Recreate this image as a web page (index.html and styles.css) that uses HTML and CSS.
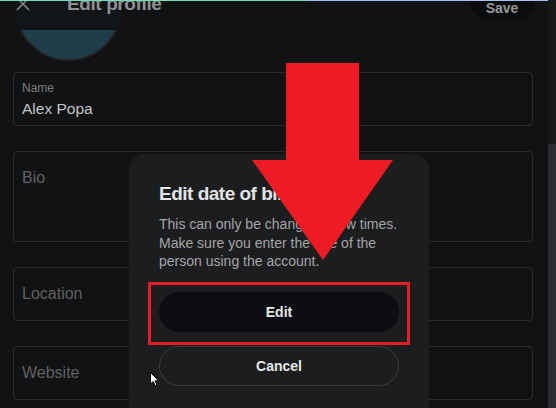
FILE: index.html
```html
<!DOCTYPE html>
<html lang="en">
<head>
<meta charset="utf-8">
<title>Edit profile</title>
<link rel="stylesheet" href="styles.css">
</head>
<body>
<div class="topline"><span class="seg-green"></span><span class="seg-blue"></span></div>

<main class="page">
  <div class="avatar"></div>
  <div class="fields">
    <div class="field field-filled">
      <span class="label">Name</span>
      <span class="value">Alex Popa</span>
    </div>
    <div class="field field-bio"><span class="placeholder">Bio</span></div>
    <div class="field"><span class="placeholder">Location</span></div>
    <div class="field"><span class="placeholder">Website</span></div>
  </div>
</main>

<header class="topbar">
  <svg class="close" width="14" height="14" viewBox="0 0 14 14"><path d="M1 1 L13 13 M13 1 L1 13" stroke="#8a8b8d" stroke-width="1.4" fill="none"/></svg>
  <h1 class="title">Edit profile</h1>
  <button class="save">Save</button>
</header>

<div class="scrollbar"><div class="thumb"></div></div>

<section class="modal">
  <h2 class="modal-title">Edit date of birth</h2>
  <p class="modal-text">This can only be changed a few times. Make sure you enter the age of the person using the account.</p>
  <div class="highlight">
    <button class="btn btn-edit">Edit</button>
  </div>
  <button class="btn btn-cancel">Cancel</button>
</section>

<svg class="arrow" width="556" height="408" viewBox="0 0 556 408">
  <polygon points="286,63 359,63 359,160 393,160 323,260 252,160 286,160" fill="#ed1c24"/>
</svg>

<svg class="cursor" width="10" height="15" viewBox="0 0 10 15">
  <path d="M0.5 0.5 L0.5 12 L3.2 9.4 L5.2 13.8 L7 13 L5 8.8 L8.6 8.8 Z" fill="#fff" stroke="#000" stroke-width="1"/>
</svg>
</body>
</html>
```
FILE: styles.css
```css
* { box-sizing: border-box; }
html, body {
  margin: 0;
  padding: 0;
  width: 556px;
  height: 408px;
  overflow: hidden;
  background: #111213;
  font-family: "Liberation Sans", Arial, sans-serif;
}
body { position: relative; }

.topline {
  position: absolute;
  top: 0; left: 0;
  width: 548px;
  height: 1px;
  display: flex;
  z-index: 5;
}
.seg-green { width: 306px; background: #6fe0b4; }
.seg-blue { flex: 1; background: #9ec3ee; }

.page {
  padding: 0 23px 0 13px;
}
.avatar {
  width: 107px;
  height: 107px;
  margin: -46px 0 0 2px;
  border-radius: 50%;
  background: #1f3e4a;
  border: 2px solid #242628;
}
.fields {
  margin-top: 11px;
  display: flex;
  flex-direction: column;
  gap: 25px;
}
.field {
  height: 54px;
  border: 1px solid #2a2b2d;
  border-radius: 4px;
  padding: 16px 8px 0;
  display: flex;
  flex-direction: column;
}
.field-filled { padding-top: 7px; }
.field-bio { height: 91px; }
.label {
  font-size: 12px;
  line-height: 16px;
  color: #7c7d7f;
}
.value {
  margin-top: 2px;
  font-size: 15.5px;
  line-height: 22px;
  color: #c4c5c7;
}
.placeholder {
  font-size: 16px;
  line-height: 20px;
  color: #606163;
}

.topbar {
  position: absolute;
  top: 0; left: 0;
  width: 548px;
  height: 30px;
  background: rgba(17, 18, 19, 0.93);
  display: flex;
  align-items: flex-start;
  z-index: 2;
}
.close {
  margin: -3px 0 0 16px;
}
.title {
  margin: -7px 0 0 37px;
  font-size: 19px;
  letter-spacing: -0.4px;
  line-height: 22px;
  font-weight: bold;
  color: #8f9092;
}
.save {
  margin: -11px 15px 0 auto;
  width: 62px;
  height: 30px;
  border: none;
  border-radius: 15px;
  background: #0b0c0e;
  color: #959698;
  font-family: inherit;
  font-weight: bold;
  font-size: 14px;
  padding: 8px 0 0;
  line-height: 14px;
}

.scrollbar {
  position: absolute;
  top: 0; right: 0;
  width: 8px;
  height: 408px;
  background: #18191a;
  padding-top: 144px;
}
.thumb {
  height: 100%;
  background: #2c2d30;
}

.modal {
  position: absolute;
  left: 129px;
  top: 154px;
  width: 300px;
  height: 280px;
  background: #1c1d1f;
  border-radius: 16px;
  padding: 28px 30px 0;
  z-index: 3;
}
.modal-title {
  margin: 0;
  font-size: 19px;
  letter-spacing: -0.5px;
  line-height: 24px;
  font-weight: bold;
  color: #e2e3e4;
}
.modal-text {
  margin: 9px 0 0;
  font-size: 14px;
  line-height: 18.5px;
  color: #a4a5a7;
}
.highlight {
  margin: 11px -11px 0;
  border: 3px solid #e81c24;
  padding: 7px 8px 10px;
}
.btn {
  display: block;
  width: 240px;
  height: 40px;
  border-radius: 20px;
  font-family: inherit;
  font-weight: bold;
  font-size: 14px;
  color: #e6e7e8;
  padding: 0;
}
.btn-edit {
  border: none;
  background: #0d0e12;
}
.btn-cancel {
  margin-top: 1px;
  background: transparent;
  border: 1px solid #3b3c3f;
}

.arrow {
  position: absolute;
  top: 0; left: 0;
  z-index: 4;
}
.cursor {
  position: absolute;
  left: 150px;
  top: 372px;
  z-index: 6;
}
```
